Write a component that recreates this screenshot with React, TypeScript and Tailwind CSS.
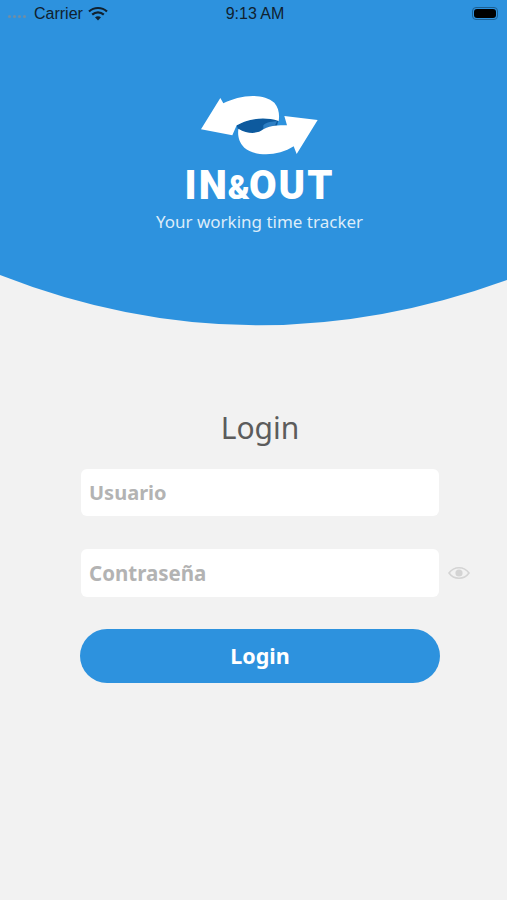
export default function App() {
  return (
    <div className="w-[507px] h-[900px] bg-[#f2f2f2] overflow-hidden flex flex-col font-['Noto_Sans',sans-serif]">
      <div className="h-[275px] bg-[#2d92de] flex flex-col shrink-0">
        <div className="h-[27px] pl-2 pr-[9px] flex items-center justify-between font-['Liberation_Sans',sans-serif] text-[16px] text-[#10212f]">
          <div className="w-[100px] flex items-center">
            <div className="flex gap-[2px] mr-[8px] mt-[5px]">
              <span className="w-[3px] h-[3px] rounded-full bg-[#6f8ea6]"></span>
              <span className="w-[3px] h-[3px] rounded-full bg-[#6f8ea6]"></span>
              <span className="w-[3px] h-[3px] rounded-full bg-[#6f8ea6]"></span>
              <span className="w-[3px] h-[3px] rounded-full bg-[#6f8ea6]"></span>
            </div>
            <span>Carrier</span>
            <svg className="ml-[5px] shrink-0" width="20" height="15" viewBox="0 0 20 15">
              <path d="M1 5.5C6 .8 14 .8 19 5.5" fill="none" stroke="#10212f" strokeWidth="2.2" />
              <path d="M4.2 8.6C7.5 5.6 12.5 5.6 15.8 8.6" fill="none" stroke="#10212f" strokeWidth="2.2" />
              <path d="M7 11.3 10 14.5 13 11.3C11.2 9.8 8.8 9.8 7 11.3Z" fill="#10212f" />
            </svg>
          </div>
          <span className="ml-[4px]">9:13 AM</span>
          <div className="w-[100px] flex justify-end">
            <div className="w-[26px] h-[13px] rounded-[4px] border border-[#1c5f92] p-[1px]">
              <div className="w-full h-full rounded-[3px] bg-black"></div>
            </div>
          </div>
        </div>
        <div className="flex flex-col items-center ml-[12px] mt-[65px]">
          <svg className="shrink-0 mr-[2px]" width="128" height="66" viewBox="0 0 384 198">
            <path d="M125 100C170 76 215 72 250 85L245 105 205 115 170 128 130 115Z" fill="#0d5a9e" />
            <path d="M205 100C215 90 232 88 246 88L240 100 205 112Z" fill="#2d7fc4" />
            <path d="M18 112 76 18 85 34C130 10 202 0 238 32 252 48 254 70 251 87 200 70 150 85 125 100L112 130Z" fill="#fff" />
            <path d="M368 84 305 186 296 163C250 194 178 194 148 167 130 148 128 130 130 110 160 128 190 125 205 112 225 100 250 100 276 100L268 72Z" fill="#fff" />
          </svg>
          <div className="mt-[10px] h-[36px] flex items-baseline text-white font-['Roboto',sans-serif] font-black text-[40px] leading-[36px] tracking-[2px]">
            <span>IN</span>
            <span className="text-[33px] -mx-[1px] tracking-normal">&amp;</span>
            <span>OUT</span>
          </div>
          <div className="mt-[6px] text-[17px] leading-[24px] text-[#dcecf9]">Your working time tracker</div>
        </div>
      </div>
      <svg className="shrink-0 block" width="507" height="51" viewBox="0 0 507 51">
        <path d="M0 0 Q 250 98 507 5 L507 0Z" fill="#2d92de" />
      </svg>
      <div className="flex flex-col items-center mt-[80px] pl-[81px] pr-[68px]">
        <h1 className="text-[30px] leading-[44px] text-[#5c5c5c] font-normal w-[358px] text-center">Login</h1>
        <div className="mt-[19px] w-[358px] h-[47px] bg-white rounded-[6px] flex items-center px-2 text-[20px] font-bold text-[#b3b3b3]">Usuario</div>
        <div className="mt-[33px] w-[358px] flex items-center relative">
          <div className="w-full h-[48px] bg-white rounded-[6px] flex items-center px-2 text-[20.5px] font-bold text-[#b3b3b3]">Contraseña</div>
          <svg className="absolute left-[367px]" width="22" height="16" viewBox="0 0 22 16">
            <path d="M1 8C6 1 16 1 21 8 16 15 6 15 1 8Z" fill="none" stroke="#d4d4d4" strokeWidth="1.6" />
            <circle cx="11" cy="8" r="3.6" fill="#d4d4d4" />
          </svg>
        </div>
        <button className="mt-[32px] w-[360px] h-[54px] shrink-0 rounded-[27px] bg-[#2d92de] text-white text-[21.5px] font-bold">Login</button>
      </div>
    </div>
  );
}
